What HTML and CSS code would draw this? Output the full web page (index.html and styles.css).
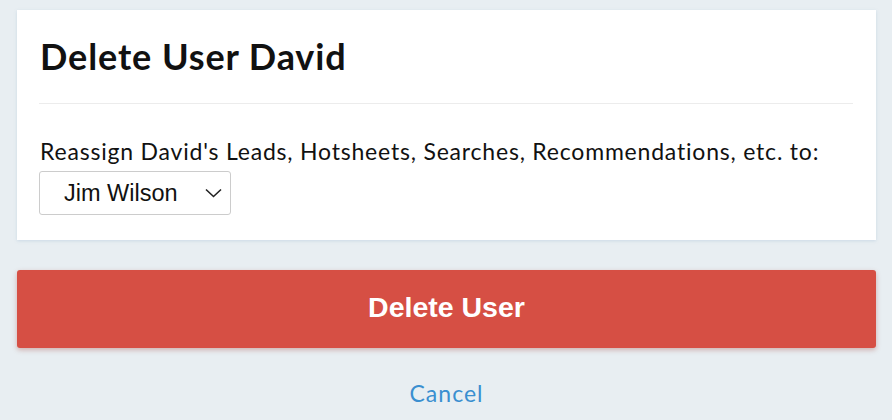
FILE: index.html
```html
<!DOCTYPE html>
<html>
<head>
<meta charset="utf-8">
<link rel="stylesheet" href="styles.css">
</head>
<body>
<div class="page">
  <section class="card">
    <h1 class="title">Delete User David</h1>
    <hr class="divider">
    <p class="label">Reassign David's Leads, Hotsheets, Searches, Recommendations, etc. to:</p>
    <div class="select">
      <span class="select-text">Jim Wilson</span>
      <svg class="chevron" width="17" height="10" viewBox="0 0 17 10"><path d="M1 1.5 L8.5 8.5 L16 1.5" fill="none" stroke="#222" stroke-width="1.6"/></svg>
    </div>
  </section>
  <button class="delete-btn">Delete User</button>
  <a class="cancel" href="#">Cancel</a>
</div>
</body>
</html>
```
FILE: styles.css
```css
html, body {
  margin: 0;
  padding: 0;
  background: #e8eef2;
}
.page {
  display: flex;
  flex-direction: column;
  padding: 10px 16px 0 17px;
  font-family: Lato, "Noto Sans", sans-serif;
}
.card {
  background: #fff;
  box-shadow: 0 1px 3px rgba(150, 180, 210, 0.35);
  padding: 24px 23px 25px 23px;
  display: flex;
  flex-direction: column;
  align-items: flex-start;
}
.title {
  margin: 0;
  font-size: 36px;
  font-weight: 700;
  letter-spacing: 0.9px;
  line-height: 44px;
  color: #111;
}
.divider {
  align-self: stretch;
  border: 0;
  border-top: 1px solid #ececec;
  margin: 25px 0 0 -1px;
}
.label {
  margin: 32px 0 0 0;
  font-size: 23px;
  letter-spacing: 0.8px;
  line-height: 30px;
  color: #111;
}
.select {
  margin-top: 5px;
  margin-left: -1px;
  height: 42px;
  border: 1px solid #ccc;
  border-radius: 3px;
  display: flex;
  align-items: center;
  justify-content: space-between;
  padding: 0 8px 0 24px;
  box-sizing: content-box;
  width: 158px;
}
.select-text {
  font-family: "Liberation Sans", Arial, sans-serif;
  font-size: 23.5px;
  color: #111;
}
.chevron {
  display: block;
}
.delete-btn {
  margin-top: 30px;
  height: 78px;
  border: 0;
  border-radius: 3px;
  background: #d64f44;
  color: #fff;
  font-family: "Liberation Sans", Arial, sans-serif;
  font-weight: 700;
  font-size: 28.5px;
  padding: 0 0 3px 0;
  box-shadow: 0 2px 5px rgba(160, 60, 50, 0.35);
}
.cancel {
  align-self: center;
  margin-top: 31px;
  font-size: 23px;
  letter-spacing: 1px;
  color: #3a8fd0;
  text-decoration: none;
}
```
